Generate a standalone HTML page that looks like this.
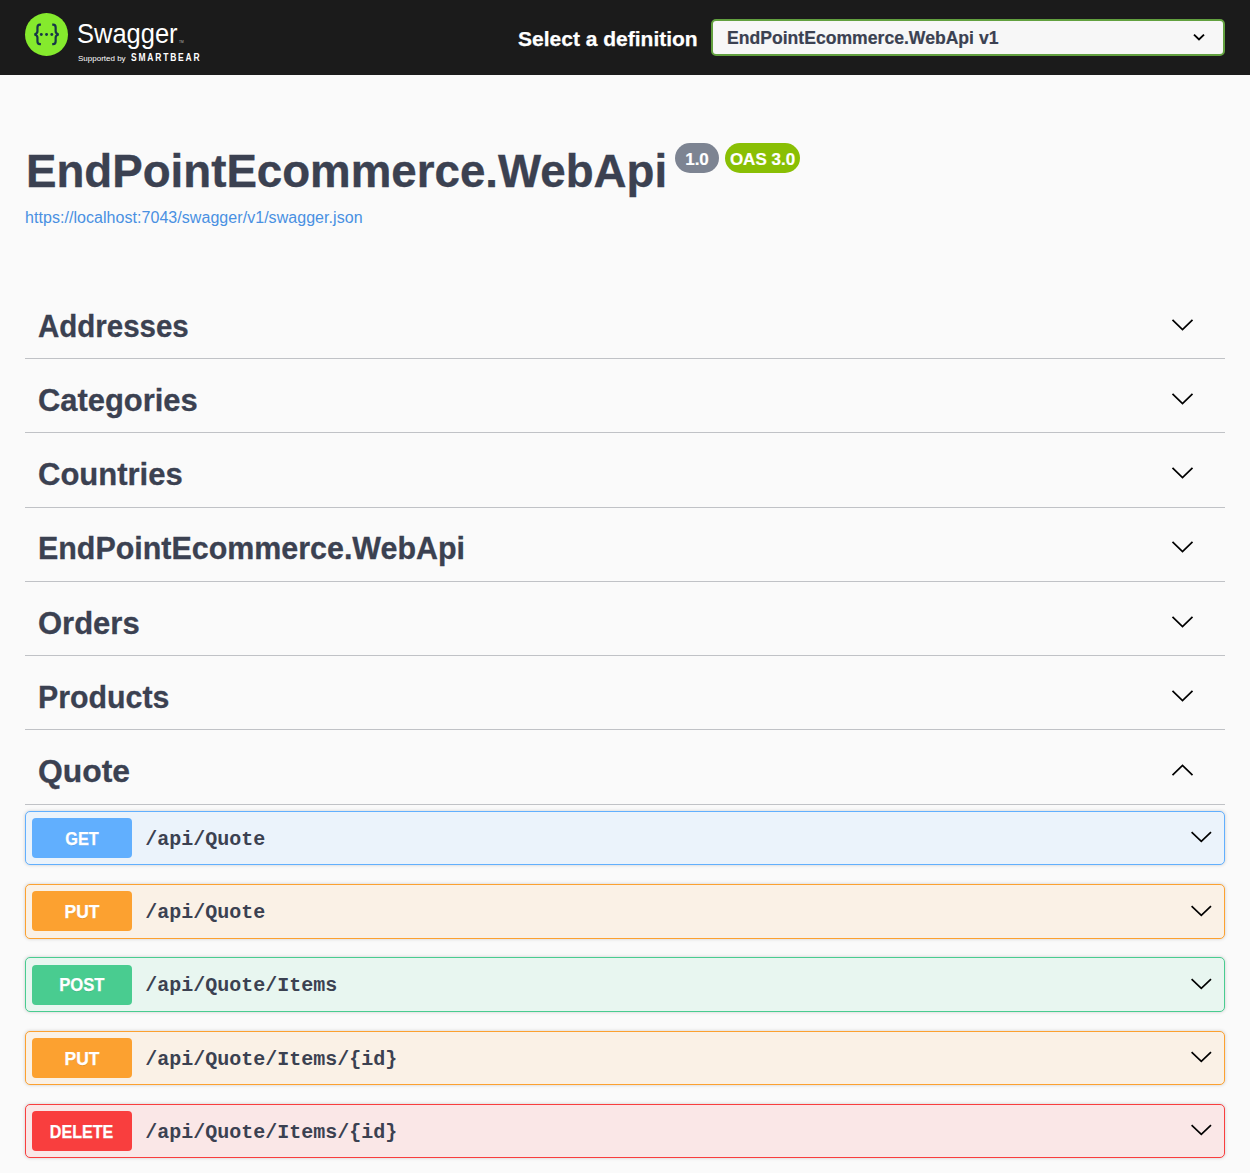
<!DOCTYPE html>
<html><head><meta charset="utf-8">
<style>
*{box-sizing:border-box;margin:0;padding:0}
html,body{width:1250px;height:1173px;overflow:hidden;background:#fafafa;font-family:"Liberation Sans",sans-serif;color:#3b4151}
.a{position:absolute;white-space:nowrap;line-height:1}
#top{position:absolute;left:0;top:0;width:1250px;height:75px;background:#1b1b1b}
.logo{position:absolute;left:25px;top:13px;width:43px;height:43px;border-radius:50%;background:#85ea2d}
.sel{position:absolute;left:711px;top:19px;width:514px;height:37px;border:2.5px solid #62a03f;border-radius:5px;background:#f7f7f7}
.tag{position:absolute;left:25px;width:1200px;border-bottom:1.25px solid rgba(59,65,81,.3)}
.tagt{position:absolute;left:38px;font-size:31px;font-weight:bold;color:#3b4151;line-height:1;letter-spacing:0;transform-origin:0 0;-webkit-text-stroke:.3px #3b4151}
.chev{position:absolute;left:1170px}
.op{position:absolute;left:25px;width:1200px;height:54px;border:1px solid;border-radius:5px;box-shadow:0 0 3.75px rgba(0,0,0,.19)}
.m{position:absolute;left:6px;top:calc(50% - 20px);width:100px;height:40px;border-radius:4px;color:#fff;font-weight:bold;font-size:17.5px;text-align:center;line-height:40px;text-shadow:0 1.25px 0 rgba(0,0,0,.1)}
.m span{display:inline-block;-webkit-text-stroke:.25px #fff;transform:scaleX(.88);position:relative;top:1px}
.p{position:absolute;left:119.2px;top:calc(50% - 24.1px);height:52px;line-height:52px;font-family:"Liberation Mono",monospace;font-weight:bold;font-size:20px;color:#3b4151}
.oc{position:absolute;left:1164px;top:calc(50% - 8px)}
.get{background:#ebf3fb;border-color:#61affe}.get .m{background:#61affe}
.put{background:#faf1e6;border-color:#fca130}.put .m{background:#fca130}
.post{background:#e8f6f0;border-color:#49cc90}.post .m{background:#49cc90}
.del{background:#fae7e7;border-color:#f93e3e}.del .m{background:#f93e3e}
</style></head><body>
<div id="top">
  <div class="logo"></div>
  <svg class="a" style="left:25px;top:13px" width="43" height="43" viewBox="0 0 43 43">
    <g fill="none" stroke="#173647" stroke-width="2.2" stroke-linejoin="bevel">
      <path d="M15.9 11.7 H14.9 Q12.45 11.7 12.45 14.6 V18.3 Q12.45 20.6 9.5 21.45 Q12.45 22.3 12.45 24.6 V28.3 Q12.45 31.1 14.9 31.1 H15.9"/>
      <path d="M27.2 11.7 H28.2 Q30.65 11.7 30.65 14.6 V18.3 Q30.65 20.6 33.6 21.45 Q30.65 22.3 30.65 24.6 V28.3 Q30.65 31.1 28.2 31.1 H27.2"/>
    </g>
    <g fill="#173647"><circle cx="16.3" cy="21.45" r="1.45"/><circle cx="21.55" cy="21.45" r="1.45"/><circle cx="26.8" cy="21.45" r="1.45"/></g>
  </svg>
  <div class="a" style="left:77px;top:20px;font-size:28px;color:#fff;transform:scaleX(.91);transform-origin:0 0">Swagger</div>
  <div class="a" style="left:78px;top:54.5px;font-size:8px;color:#fff">Supported by</div>
  <div class="a" style="left:179px;top:41px;font-size:3.2px;color:#bbb">TM</div>
  <div class="a" style="left:130.5px;top:52.2px;font-size:10.6px;color:#fff;font-weight:bold;letter-spacing:2.25px;transform:scaleX(.8);transform-origin:0 0">SMARTBEAR</div>
  <div class="a" style="left:518px;top:28px;font-size:21px;font-weight:bold;color:#fff;-webkit-text-stroke:.25px #fff">Select a definition</div>
  <div class="sel"></div>
  <div class="a" style="left:727px;top:29.8px;font-size:17.6px;font-weight:bold;color:#3b4151;-webkit-text-stroke:.2px #3b4151">EndPointEcommerce.WebApi v1</div>
  <svg class="a" style="left:1190.8px;top:31px" width="16" height="13" viewBox="0 0 16 13"><path d="M3 3.6 L8 8.5 L13 3.6" fill="none" stroke="#000" stroke-width="1.9"/></svg>
</div>

<div class="a" style="left:26px;top:147.8px;font-size:46.5px;font-weight:bold;color:#3b4151;letter-spacing:0;-webkit-text-stroke:.35px #3b4151;transform:scaleX(.982);transform-origin:0 0">EndPointEcommerce.WebApi</div>
<div class="a" style="left:675px;top:143px;width:44px;height:30px;border-radius:15px;background:#7d8492"></div>
<div class="a" style="left:725px;top:143px;width:75px;height:30px;border-radius:15px;background:#89bf04"></div>
<div class="a" style="left:675px;top:150.6px;width:44px;text-align:center;font-size:17px;font-weight:bold;color:#fff;-webkit-text-stroke:.2px #fff">1.0</div>
<div class="a" style="left:725px;top:150.6px;width:75px;text-align:center;font-size:17px;font-weight:bold;color:#fff;-webkit-text-stroke:.2px #fff">OAS 3.0</div>
<div class="a" style="left:25px;top:210.4px;font-size:16px;color:#4990e2;letter-spacing:.05px">https://localhost:7043/swagger/v1/swagger.json</div>

<div class="tag" style="top:284px;height:75px"></div>
<div class="tag" style="top:358px;height:75px"></div>
<div class="tag" style="top:432.5px;height:75px"></div>
<div class="tag" style="top:507px;height:75px"></div>
<div class="tag" style="top:581px;height:75px"></div>
<div class="tag" style="top:655px;height:75px"></div>
<div class="tag" style="top:729.5px;height:75.5px"></div>

<div class="tagt" style="top:311px;transform:scaleX(0.951)">Addresses</div>
<div class="tagt" style="top:385px;transform:scaleX(0.997)">Categories</div>
<div class="tagt" style="top:459px;transform:scaleX(1)">Countries</div>
<div class="tagt" style="top:533px;transform:scaleX(0.981)">EndPointEcommerce.WebApi</div>
<div class="tagt" style="top:608px;transform:scaleX(1)">Orders</div>
<div class="tagt" style="top:682px;transform:scaleX(0.978)">Products</div>
<div class="tagt" style="top:756px;transform:scaleX(1.027)">Quote</div>

<svg class="chev" style="top:315px" width="25" height="20" viewBox="0 0 25 20"><path d="M2.5 4.9 L12.5 14.6 L22.5 4.9" fill="none" stroke="#000" stroke-width="1.75"/></svg>
<svg class="chev" style="top:389px" width="25" height="20" viewBox="0 0 25 20"><path d="M2.5 4.9 L12.5 14.6 L22.5 4.9" fill="none" stroke="#000" stroke-width="1.75"/></svg>
<svg class="chev" style="top:463px" width="25" height="20" viewBox="0 0 25 20"><path d="M2.5 4.9 L12.5 14.6 L22.5 4.9" fill="none" stroke="#000" stroke-width="1.75"/></svg>
<svg class="chev" style="top:537px" width="25" height="20" viewBox="0 0 25 20"><path d="M2.5 4.9 L12.5 14.6 L22.5 4.9" fill="none" stroke="#000" stroke-width="1.75"/></svg>
<svg class="chev" style="top:612px" width="25" height="20" viewBox="0 0 25 20"><path d="M2.5 4.9 L12.5 14.6 L22.5 4.9" fill="none" stroke="#000" stroke-width="1.75"/></svg>
<svg class="chev" style="top:686px" width="25" height="20" viewBox="0 0 25 20"><path d="M2.5 4.9 L12.5 14.6 L22.5 4.9" fill="none" stroke="#000" stroke-width="1.75"/></svg>
<svg class="chev" style="top:760px" width="25" height="20" viewBox="0 0 25 20"><path d="M2.5 15.1 L12.5 5.4 L22.5 15.1" fill="none" stroke="#000" stroke-width="1.75"/></svg>

<div class="op get" style="top:811px;height:54px"><div class="m"><span style="transform:scaleX(.93)">GET</span></div><div class="p">/api/Quote</div><svg class="oc" width="25" height="16" viewBox="0 0 25 16"><path d="M1.6 2.2 L11.3 11.4 L21 2.2" fill="none" stroke="#000" stroke-width="1.7"/></svg></div>
<div class="op put" style="top:884px;height:55px"><div class="m" style="top:6px"><span style="transform:scaleX(1)">PUT</span></div><div class="p">/api/Quote</div><svg class="oc" width="25" height="16" viewBox="0 0 25 16"><path d="M1.6 2.2 L11.3 11.4 L21 2.2" fill="none" stroke="#000" stroke-width="1.7"/></svg></div>
<div class="op post" style="top:957px;height:55px"><div class="m"><span style="transform:scaleX(.95);top:0">POST</span></div><div class="p">/api/Quote/Items</div><svg class="oc" width="25" height="16" viewBox="0 0 25 16"><path d="M1.6 2.2 L11.3 11.4 L21 2.2" fill="none" stroke="#000" stroke-width="1.7"/></svg></div>
<div class="op put" style="top:1031px;height:54px"><div class="m"><span style="transform:scaleX(1)">PUT</span></div><div class="p">/api/Quote/Items/{id}</div><svg class="oc" width="25" height="16" viewBox="0 0 25 16"><path d="M1.6 2.2 L11.3 11.4 L21 2.2" fill="none" stroke="#000" stroke-width="1.7"/></svg></div>
<div class="op del" style="top:1104px;height:54px"><div class="m"><span style="transform:scaleX(.92)">DELETE</span></div><div class="p">/api/Quote/Items/{id}</div><svg class="oc" width="25" height="16" viewBox="0 0 25 16"><path d="M1.6 2.2 L11.3 11.4 L21 2.2" fill="none" stroke="#000" stroke-width="1.7"/></svg></div>
</body></html>
